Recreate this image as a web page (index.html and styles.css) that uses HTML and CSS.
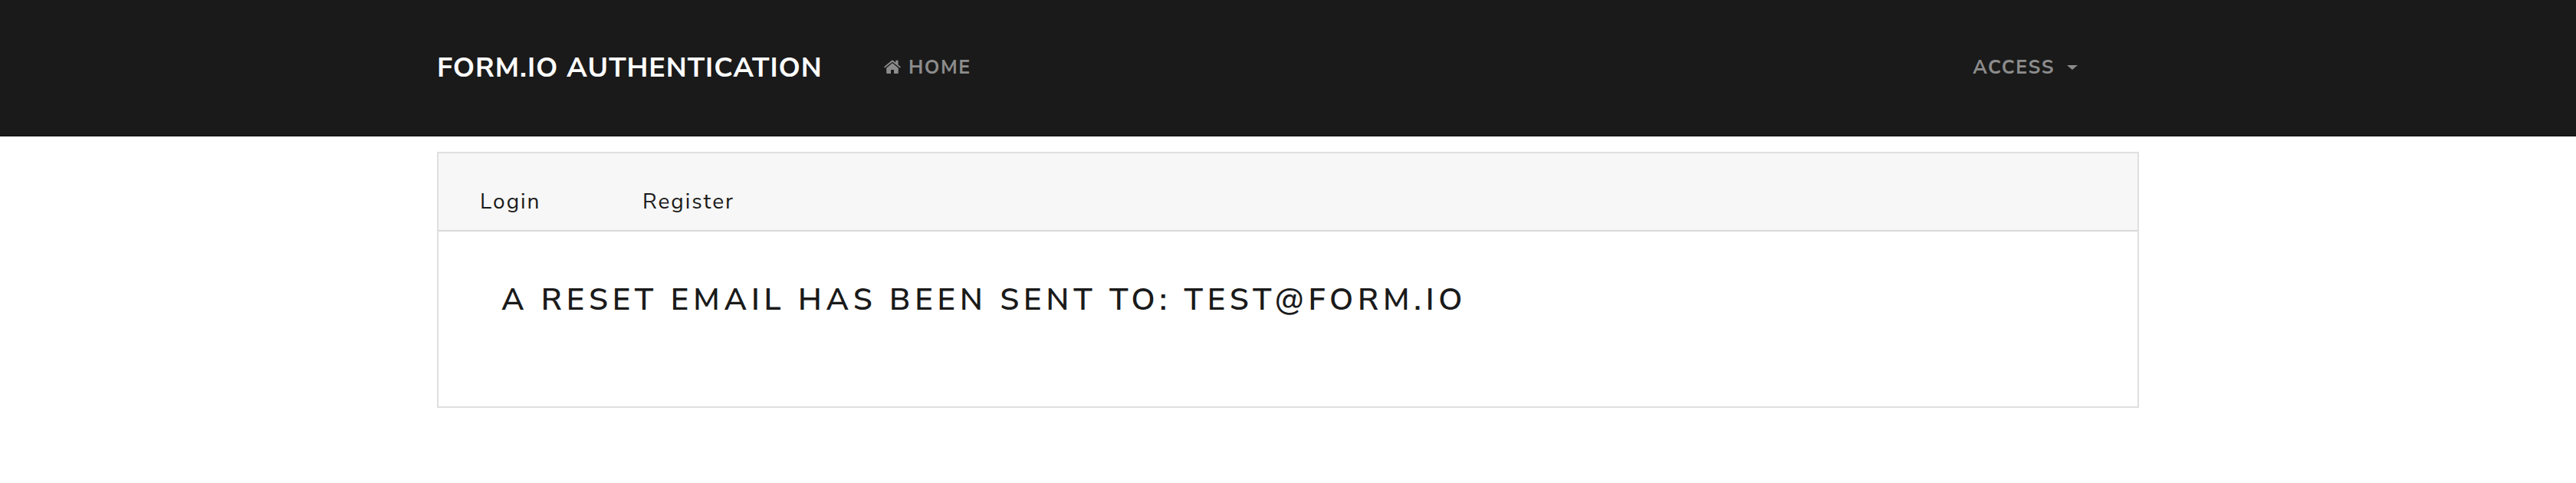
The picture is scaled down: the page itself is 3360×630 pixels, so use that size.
FILE: index.html
```html
<!DOCTYPE html>
<html lang="en">
<head>
<meta charset="utf-8">
<title>Form.io Authentication</title>
<link rel="stylesheet" href="styles.css">
</head>
<body>
<nav class="navbar">
  <div class="container nav-row">
    <a class="brand">FORM.IO AUTHENTICATION</a>
    <a class="nav-link home">
      <svg class="house" viewBox="0 0 22 18" width="22" height="18"><path d="M11 4.3 3.2 10.8V17q0 1 1 1H9v-5h4v5h4.800q1 0 1-1v-6.200z"/><path d="M0 9.300 9.900 1Q11 .2 12.100 1L15.300 3.700V.8h3.200v5.600L22 9.300l-1.100 1.300L11 2.700 1.100 10.600z"/></svg>
      <span>HOME</span>
    </a>
    <a class="nav-link access"><span>ACCESS</span><i class="caret"></i></a>
  </div>
</nav>
<main class="container">
  <section class="card">
    <header class="tabs"><a class="tab login">Login</a><a class="tab register">Register</a></header>
    <div class="card-body"><h3 class="message">A RESET EMAIL HAS BEEN SENT TO: TEST@FORM.IO</h3></div>
  </section>
</main>
</body>
</html>
```
FILE: styles.css
```css
* { box-sizing: border-box; }
body { margin: 0; background: #fff; color: #1a1a1a; font-family: "Nunito Sans", Nunito, Lato, sans-serif; font-kerning: normal; }
.container { width: 2220px; margin: 0 auto; }
.navbar { height: 178px; background: #1a1a1a; border-bottom: 2px solid #161616; }
.nav-row { display: flex; align-items: flex-start; padding-top: 67px; white-space: nowrap; }
.brand { width: 583px; color: #fff; font-size: 36px; line-height: 44px; font-weight: 700; letter-spacing: 1px; }
.nav-link { display: flex; align-items: baseline; padding-top: 6px; color: #8c8c8c; font-size: 25px; line-height: 30px; font-weight: 700; letter-spacing: 1.5px; }
.house { margin-right: 10px; fill: #8c8c8c; }
.access { margin-left: auto; margin-right: 80px; }
.caret { width: 14px; height: 6px; margin-left: 16px; align-self: center; background: #8c8c8c; clip-path: polygon(0 0, 100% 0, 50% 100%); }
.card { height: 334px; margin-top: 20px; border: 2px solid #dfdfdf; }
.tabs { display: flex; height: 102px; padding: 45px 0 0 54px; background: #f7f7f7; border-bottom: 2px solid #d8d8d8; }
.tab { font-size: 28px; line-height: 36px; letter-spacing: 2px; }
.login { width: 212px; }
.card-body { padding: 59px 82px; }
.message { margin: 0; font-size: 40px; line-height: 60px; font-weight: 600; letter-spacing: 5.93px; white-space: nowrap; }
```
